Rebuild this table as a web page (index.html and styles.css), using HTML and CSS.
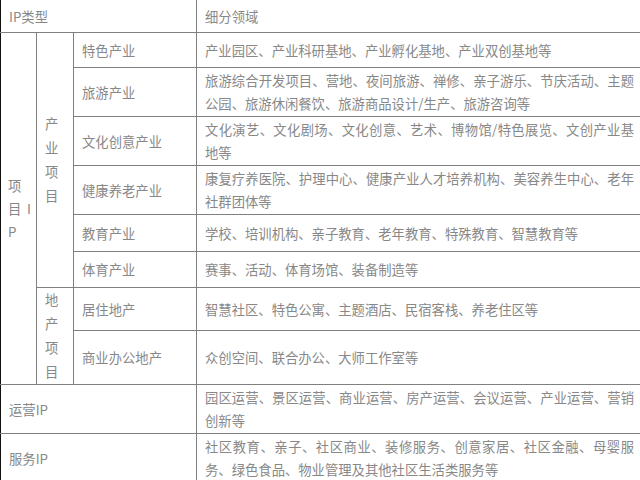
FILE: index.html
```html
<!DOCTYPE html>
<html lang="zh-CN">
<head>
<meta charset="utf-8">
<title>IP类型</title>
<link rel="stylesheet" href="styles.css">
</head>
<body>
<table class="ip-table">
  <colgroup>
    <col class="c1"><col class="c2"><col class="c3"><col class="c4">
  </colgroup>
  <tr class="r-head">
    <td colspan="3" class="cell-name">IP类型</td>
    <td class="cell-desc">细分领域</td>
  </tr>
  <tr class="r35">
    <td rowspan="8" class="cell-vert">项目IP</td>
    <td rowspan="6" class="cell-stack">产业项目</td>
    <td class="cell-name">特色产业</td>
    <td class="cell-desc">产业园区、产业科研基地、产业孵化基地、产业双创基地等</td>
  </tr>
  <tr class="r49">
    <td class="cell-name">旅游产业</td>
    <td class="cell-desc">旅游综合开发项目、营地、夜间旅游、禅修、亲子游乐、节庆活动、主题公园、旅游休闲餐饮、旅游商品设计/生产、旅游咨询等</td>
  </tr>
  <tr class="r48">
    <td class="cell-name">文化创意产业</td>
    <td class="cell-desc">文化演艺、文化剧场、文化创意、艺术、博物馆/特色展览、文创产业基地等</td>
  </tr>
  <tr class="r49">
    <td class="cell-name">健康养老产业</td>
    <td class="cell-desc">康复疗养医院、护理中心、健康产业人才培养机构、美容养生中心、老年社群团体等</td>
  </tr>
  <tr class="r37">
    <td class="cell-name">教育产业</td>
    <td class="cell-desc">学校、培训机构、亲子教育、老年教育、特殊教育、智慧教育等</td>
  </tr>
  <tr class="r36">
    <td class="cell-name">体育产业</td>
    <td class="cell-desc">赛事、活动、体育场馆、装备制造等</td>
  </tr>
  <tr class="r43">
    <td rowspan="2" class="cell-stack">地产项目</td>
    <td class="cell-name">居住地产</td>
    <td class="cell-desc">智慧社区、特色公寓、主题酒店、民宿客栈、养老住区等</td>
  </tr>
  <tr class="r54">
    <td class="cell-name">商业办公地产</td>
    <td class="cell-desc">众创空间、联合办公、大师工作室等</td>
  </tr>
  <tr class="r48">
    <td colspan="3" class="cell-name">运营IP</td>
    <td class="cell-desc">园区运营、景区运营、商业运营、房产运营、会议运营、产业运营、营销创新等</td>
  </tr>
  <tr class="r49">
    <td colspan="3" class="cell-name">服务IP</td>
    <td class="cell-desc">社区教育、亲子、社区商业、装修服务、创意家居、社区金融、母婴服务、绿色食品、物业管理及其他社区生活类服务等</td>
  </tr>
</table>
</body>
</html>
```

FILE: styles.css
```css
html, body {
  margin: 0;
  padding: 0;
  background: #ffffff;
}

body {
  font-family: "Noto Sans CJK SC", "Noto Sans", sans-serif;
  font-size: 13.33px;
  color: #888888;
}

.ip-table {
  width: 640px;
  margin-top: -1px;
  border-collapse: collapse;
  table-layout: fixed;
  border-left: 1px solid #111;
  border-right: 1px solid #111;
}

.c1 { width: 36px; }
.c2 { width: 37px; }
.c3 { width: 123px; }
.c4 { width: 444px; }

.ip-table td {
  border: 1px solid #808080;
  vertical-align: middle;
  line-height: 23px;
  padding: 0;
}

.ip-table td:first-child {
  border-left: 1px solid #111;
}

.ip-table td:last-child {
  border-right: 1px solid #111;
}

.ip-table .cell-desc {
  border-left-color: #444;
  padding: 1px 6px 1px 8px;
  text-align: justify;
}

.ip-table .cell-name {
  padding: 0 6px 0 8px;
}

.ip-table .cell-vert {
  padding: 0 5px 0 7px;
  line-height: 23px;
  text-align: justify;
  word-break: break-all;
}

.ip-table .cell-stack {
  padding: 0 8px;
  line-height: 24px;
  text-align: left;
}

.r-head { height: 33px; }
.r35 { height: 35px; }
.r36 { height: 36px; }
.r37 { height: 37px; }
.r43 { height: 43px; }
.r48 { height: 48px; }
.r49 { height: 49px; }
.r54 { height: 54px; }
```
